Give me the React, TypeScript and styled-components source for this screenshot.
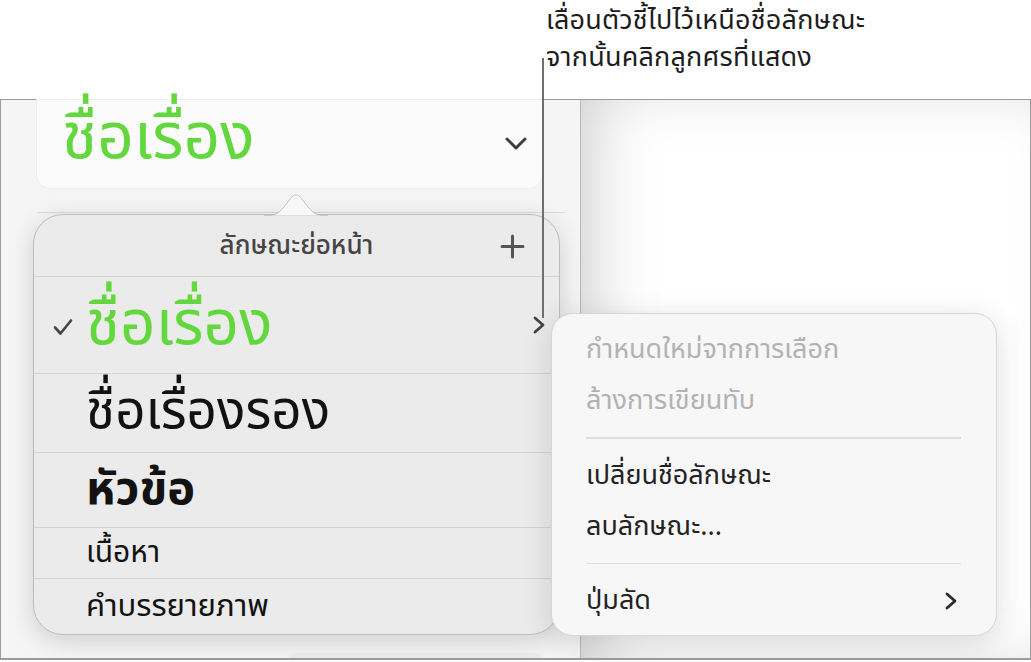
import React from "react";
import styled, { createGlobalStyle } from "styled-components";

const GlobalStyle = createGlobalStyle`
  html, body { margin: 0; padding: 0; background: #ffffff; }
  body {
    font-family: "Noto Sans Thai", "Noto Sans", "DejaVu Sans", sans-serif;
    -webkit-font-smoothing: antialiased;
  }
  * { box-sizing: border-box; }
`;

const GREEN = "#62d83e";

const Page = styled.div`
  position: relative;
  width: 1031px;
  height: 662px;
  overflow: hidden;
  background: #ffffff;
`;

const Callout = styled.div`
  height: 99px;
  padding: 2px 0 0 546px;
  font-size: 27px;
  letter-spacing: 0.2px;
  color: #1d1d1d;
`;

const CalloutLine = styled.div`
  height: 37px;
  line-height: 37px;
  white-space: nowrap;
`;

const LeaderLine = styled.div`
  position: absolute;
  left: 542px;
  top: 58px;
  width: 2px;
  height: 260px;
  background: #6e6e6e;
`;

const Frame = styled.div`
  display: flex;
  height: 561px;
  border: 1.5px solid #9c9c9c;
  border-bottom-width: 2px;
`;

const Sidebar = styled.div`
  width: 579px;
  display: flex;
  flex-direction: column;
  background: #f5f5f5;
`;

const Canvas = styled.div`
  flex: 1;
  background: #ffffff;
  box-shadow: inset 30px 0 70px -24px rgba(0, 0, 0, 0.22);
  border-left: 1px solid #b9b9b9;
`;

const TitleCard = styled.div`
  height: 88px;
  margin: 0 38px 0 36px;
  padding: 0 15px 0 25px;
  display: flex;
  align-items: center;
  justify-content: space-between;
  background: #fbfbfb;
  border-radius: 0 0 14px 14px;
  box-shadow: 0 0 0 1px #eeeeee;
`;

const TitleText = styled.span`
  font-size: 64px;
  line-height: 1;
  padding-bottom: 10px;
  color: ${GREEN};
`;

const Rule = styled.div`
  height: 1px;
  margin: 24px 14px 0 36px;
  background: #dcdcdc;
`;

const ButtonStub = styled.div`
  margin: auto 38px 0 289px;
  height: 5px;
  border-radius: 8px 8px 0 0;
  background: #ededed;
`;

/* Paragraph styles popover */
const Popover = styled.div`
  position: absolute;
  left: 33px;
  top: 214px;
  width: 527px;
  height: 421px;
  display: flex;
  flex-direction: column;
  background: #ebebeb;
  border: 1px solid #bdbdbd;
  border-radius: 30px;
  box-shadow: 0 6px 26px rgba(0, 0, 0, 0.16);
`;

const PointerArrow = styled.svg`
  position: absolute;
  left: 230px;
  top: -23px;
  width: 64px;
  height: 24px;
`;

const PopHeader = styled.div`
  position: relative;
  height: 62px;
  flex: none;
  display: flex;
  align-items: center;
  justify-content: center;
  border-bottom: 1.5px solid #d3d3d3;
  font-size: 26px;
  font-weight: 500;
  color: #454545;
`;

const AddButton = styled.svg`
  position: absolute;
  right: 34px;
  top: 19px;
  width: 25px;
  height: 25px;
`;

const StyleRow = styled.div<{ $h: number; $last?: boolean }>`
  position: relative;
  height: ${(p) => p.$h}px;
  flex: none;
  display: flex;
  align-items: center;
  justify-content: space-between;
  padding: 0 13px 0 52px;
  border-bottom: ${(p) => (p.$last ? "none" : "1.5px solid #d3d3d3")};
`;

const StyleName = styled.span<{ $size: number; $color?: string; $bold?: boolean }>`
  font-size: ${(p) => p.$size}px;
  line-height: 1;
  padding-bottom: ${(p) => Math.round(p.$size * 0.02)}px;
  color: ${(p) => p.$color ?? "#121212"};
  font-weight: ${(p) => (p.$bold ? 700 : 400)};
`;

const CheckMark = styled.svg`
  position: absolute;
  left: 19px;
  top: 50%;
  margin-top: -7px;
  width: 20px;
  height: 18px;
`;

const Chevron = styled.svg<{ $w: number; $h: number }>`
  width: ${(p) => p.$w}px;
  height: ${(p) => p.$h}px;
  flex: none;
`;

/* Style actions submenu */
const Submenu = styled.div`
  position: absolute;
  left: 551px;
  top: 313px;
  width: 446px;
  height: 323px;
  padding-top: 10px;
  display: flex;
  flex-direction: column;
  background: #f7f7f7;
  border: 1px solid #d6d6d6;
  border-radius: 22px;
  box-shadow: 0 6px 30px rgba(0, 0, 0, 0.14);
`;

const MenuItem = styled.div<{ $disabled?: boolean }>`
  height: 51px;
  flex: none;
  display: flex;
  align-items: center;
  justify-content: space-between;
  padding: 0 38px 0 34px;
  font-size: 27px;
  color: ${(p) => (p.$disabled ? "#b2b2b2" : "#232323")};
`;

const MenuDivider = styled.div`
  height: 1.5px;
  flex: none;
  margin: 11px 35px 11px 34px;
  background: #dedede;
`;

const ChevronDown = () => (
  <Chevron $w={22} $h={14} viewBox="0 0 22 14">
    <polyline points="2,2 11,11 20,2" fill="none" stroke="#3d3d3d" strokeWidth="3" strokeLinecap="round" strokeLinejoin="round" />
  </Chevron>
);

const ChevronRight = ({ color = "#3f3f3f" }: { color?: string }) => (
  <Chevron $w={13} $h={18} viewBox="0 0 13 18">
    <polyline points="2,2 10,9 2,16" fill="none" stroke={color} strokeWidth="2.8" strokeLinecap="round" strokeLinejoin="round" />
  </Chevron>
);

const rows = [
  { name: "ชื่อเรื่อง", h: 97, size: 62, color: GREEN, checked: true, more: true },
  { name: "ชื่อเรื่องรอง", h: 79, size: 53 },
  { name: "หัวข้อ", h: 75, size: 47, bold: true },
  { name: "เนื้อหา", h: 51, size: 30 },
  { name: "คำบรรยายภาพ", h: 56, size: 31 },
];

export default function App() {
  return (
    <Page>
      <GlobalStyle />
      <Callout>
        <CalloutLine>เลื่อนตัวชี้ไปไว้เหนือชื่อลักษณะ</CalloutLine>
        <CalloutLine>จากนั้นคลิกลูกศรที่แสดง</CalloutLine>
      </Callout>
      <Frame>
        <Sidebar>
          <TitleCard>
            <TitleText>ชื่อเรื่อง</TitleText>
            <ChevronDown />
          </TitleCard>
          <Rule />
          <ButtonStub />
        </Sidebar>
        <Canvas />
      </Frame>

      <Popover>
        <PointerArrow viewBox="0 0 64 24">
          <path
            d="M0 24 C10 24 14 22 20 15 L27 6 C30 2 34 2 37 6 L44 15 C50 22 54 24 64 24 Z"
            fill="#f8f8f8"
            stroke="#c4c4c4"
            strokeWidth="1"
          />
        </PointerArrow>
        <PopHeader>
          ลักษณะย่อหน้า
          <AddButton viewBox="0 0 25 25">
            <path d="M12.5 2 V23 M2 12.5 H23" stroke="#555555" strokeWidth="3" strokeLinecap="round" />
          </AddButton>
        </PopHeader>
        {rows.map((r, i) => (
          <StyleRow key={r.name} $h={r.h} $last={i === rows.length - 1}>
            {r.checked && (
              <CheckMark viewBox="0 0 20 18">
                <polyline points="2,9.5 7.5,15.5 18,2.5" fill="none" stroke="#444444" strokeWidth="2.6" strokeLinecap="round" strokeLinejoin="round" />
              </CheckMark>
            )}
            <StyleName $size={r.size} $color={r.color} $bold={r.bold}>
              {r.name}
            </StyleName>
            {r.more && <ChevronRight color="#444444" />}
          </StyleRow>
        ))}
      </Popover>

      <Submenu>
        <MenuItem $disabled>กำหนดใหม่จากการเลือก</MenuItem>
        <MenuItem $disabled>ล้างการเขียนทับ</MenuItem>
        <MenuDivider />
        <MenuItem>เปลี่ยนชื่อลักษณะ</MenuItem>
        <MenuItem>ลบลักษณะ...</MenuItem>
        <MenuDivider />
        <MenuItem>
          ปุ่มลัด
          <ChevronRight color="#2a2a2a" />
        </MenuItem>
      </Submenu>

      <LeaderLine />
    </Page>
  );
}
